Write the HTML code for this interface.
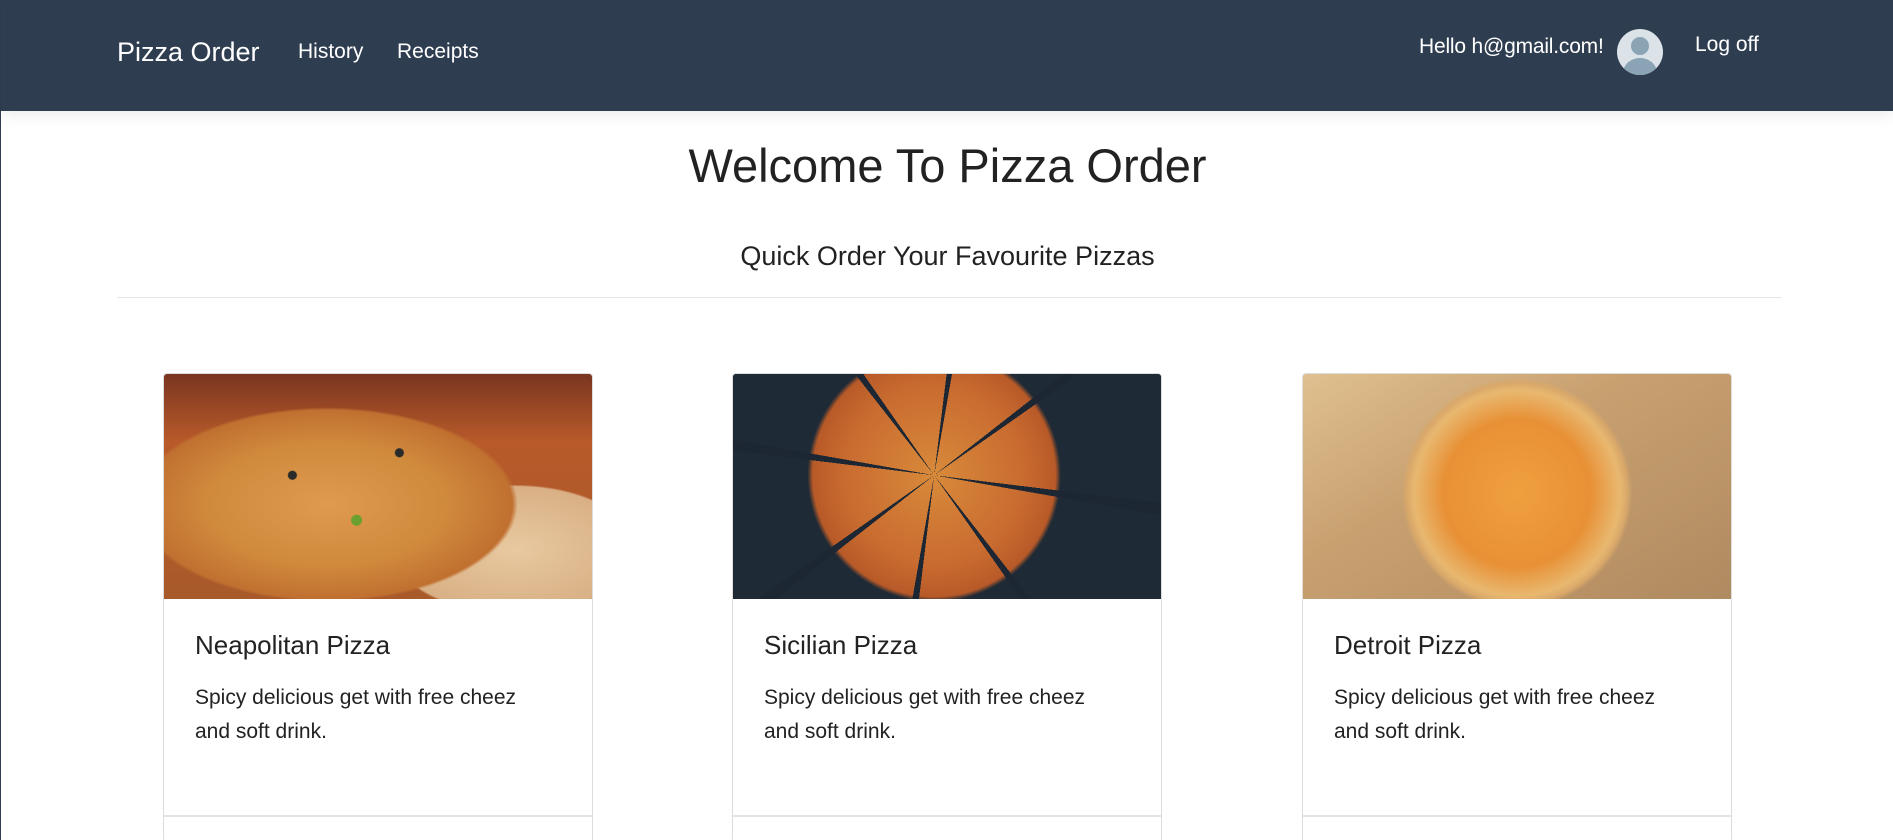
<!DOCTYPE html>
<html><head><meta charset="utf-8"><style>
*{margin:0;padding:0;box-sizing:border-box}
html,body{width:1893px;height:840px;overflow:hidden}
body{background:#fff;font-family:"Liberation Sans",sans-serif;color:#222;position:relative;border-left:1px solid #2e3e50}
.nav{position:absolute;left:0;top:0;width:1893px;height:111px;background:#2e3d50;box-shadow:0 4px 14px rgba(0,0,0,.08)}
.nav span{position:absolute;color:#fff;white-space:nowrap}
.brand{left:116px;top:37px;font-size:27px}
.l1{left:297px;top:40px;font-size:21px}
.l2{left:396px;top:40px;font-size:21px}
.hello{left:1418px;top:35px;font-size:21px;letter-spacing:-0.2px}
.logoff{left:1694px;top:33px;font-size:21px}
.av{position:absolute;left:1616px;top:29px;width:46px;height:46px;border-radius:50%;background:#dce3e8;overflow:hidden}
.av .h{position:absolute;left:14px;top:8px;width:18px;height:18px;border-radius:50%;background:#8aa4b5}
.av .b{position:absolute;left:6px;top:27px;width:34px;height:30px;border-radius:17px 17px 4px 4px;background:#8aa4b5;border-top:2px solid #dce3e8}
h1{position:absolute;left:0;width:1893px;top:138px;text-align:center;font-weight:normal;font-size:47px;color:#222}
h2{position:absolute;left:0;width:1893px;top:241px;text-align:center;font-weight:normal;font-size:27px;color:#222}
.hr{position:absolute;left:116px;width:1665px;top:297px;height:1px;background:#e6e6e6}
.card{position:absolute;top:373px;width:430px;height:470px;border:1px solid #ddd;border-radius:4px;overflow:hidden;background:#fff}
.img{height:225px;position:relative;overflow:hidden}
.card .t{position:absolute;left:31px;top:256px;font-size:26px;color:#222}
.card .d{position:absolute;left:31px;top:307px;font-size:21px;line-height:34px;color:#222;width:330px}
.card .f{position:absolute;left:0;top:441px;width:100%;height:2px;background:#e4e4e4}
.p1{background:radial-gradient(circle at 30% 45%,#2a2a2a 0 4px,transparent 5px),radial-gradient(circle at 55% 35%,#2a2a2a 0 4px,transparent 5px),radial-gradient(circle at 45% 65%,#6aa030 0 5px,transparent 6px),radial-gradient(ellipse 62% 60% at 38% 58%,#e09a50 0,#d08a3c 45%,#c07030 70%,transparent 72%),radial-gradient(ellipse 40% 40% at 82% 78%,#e8c9a0 0,#d9b085 70%,transparent 72%),linear-gradient(180deg,#7a3520 0,#b85a2a 30%,#a85a2a 100%)}
.p2{background:repeating-conic-gradient(from 10deg at 47% 45%,transparent 0 42deg,#1d2733 42deg 45deg),radial-gradient(circle at 47% 45%,#d98a3a 0,#c86b30 35%,#b85a28 47%,#1e2a36 49%),#1d2733}
.p3{background:radial-gradient(circle at 50% 53%,#f0a040 0,#e89035 30%,#e8b870 42%,#d9a86a 45%,transparent 47%),linear-gradient(150deg,#e0c090 0,#c8a070 40%,#b08a60 100%),repeating-conic-gradient(#222 0 25%,#eee 0 50%) 0 0/60px 60px}
</style></head><body>
<div class="nav">
<span class="brand">Pizza Order</span><span class="l1">History</span><span class="l2">Receipts</span>
<span class="hello">Hello h@gmail.com!</span>
<div class="av"><div class="h"></div><div class="b"></div></div>
<span class="logoff">Log off</span>
</div>
<h1>Welcome To Pizza Order</h1>
<h2>Quick Order Your Favourite Pizzas</h2>
<div class="hr"></div>
<div class="card" style="left:162px"><div class="img p1"></div><div class="t">Neapolitan Pizza</div><div class="d">Spicy delicious get with free cheez and soft drink.</div><div class="f"></div></div>
<div class="card" style="left:731px"><div class="img p2"></div><div class="t">Sicilian Pizza</div><div class="d">Spicy delicious get with free cheez and soft drink.</div><div class="f"></div></div>
<div class="card" style="left:1301px"><div class="img p3"></div><div class="t">Detroit Pizza</div><div class="d">Spicy delicious get with free cheez and soft drink.</div><div class="f"></div></div>
</body></html>
